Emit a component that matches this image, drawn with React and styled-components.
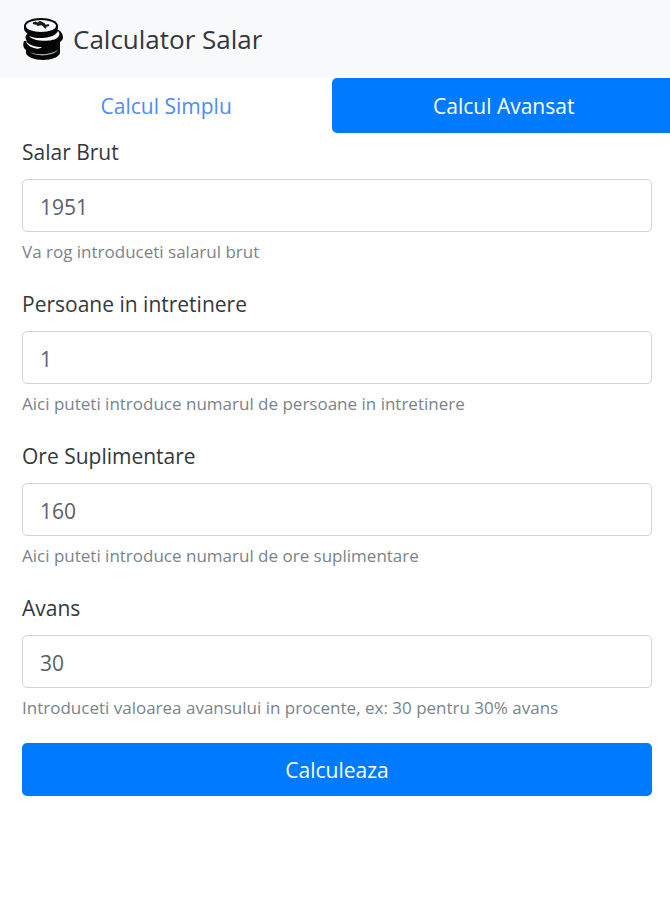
import React, { useState } from "react";
import styled, { createGlobalStyle } from "styled-components";

const FIELDS = [
  {
    id: "salar",
    label: "Salar Brut",
    value: "1951",
    hint: "Va rog introduceti salarul brut",
  },
  {
    id: "persoane",
    label: "Persoane in intretinere",
    value: "1",
    hint: "Aici puteti introduce numarul de persoane in intretinere",
  },
  {
    id: "ore",
    label: "Ore Suplimentare",
    value: "160",
    hint: "Aici puteti introduce numarul de ore suplimentare",
  },
  {
    id: "avans",
    label: "Avans",
    value: "30",
    hint: "Introduceti valoarea avansului in procente, ex: 30 pentru 30% avans",
  },
];

const CoinsLogo = () => (
  <svg width="42" height="44" viewBox="0 0 42 44" aria-hidden="true">
    <path
      d="M4 31v5c1 4 8 7 17 7s16-3 17-7v-7z"
      fill="#050505"
    />
    <path d="M7 34c7 4 20 4 29-1-4 6-23 8-29 1z" fill="#a3a5a7" />
    <path
      d="M2 24c-1 2-1 5 0 7 3 4 10 6 18 6 9 0 17-4 18-8v-8z"
      fill="#050505"
    />
    <path d="M4 24c3 4 9 6 16 6-2 2-5 2-8 1-4-1-8-4-8-7z" fill="#f8f9fa" />
    <path
      d="M5 17c-2 2-2 5 0 7 4 4 10 5 17 5 10 0 18-3 19-8 0-4-2-7-5-8z"
      fill="#050505"
    />
    <path
      d="M7 19c4 2 13 3 20 1 5-1 8-4 9-6 2 2 2 5-1 7-5 4-23 4-28-2z"
      fill="#f8f9fa"
    />
    <path
      d="M2 9c0-5 8-8 17-8s17 3 17 8v3c-1 5-8 8-17 8S3 17 2 12z"
      fill="#050505"
    />
    <ellipse cx="19" cy="9" rx="15" ry="6" fill="#f8f9fa" />
    <path
      d="M11 6l4 1 3-2 4 2 1 2 4-1M13 5l3 3 4-1 4 4"
      fill="none"
      stroke="#171717"
      strokeWidth="2"
    />
  </svg>
);

const Field = ({ id, label, value, hint, onChange }) => (
  <Group>
    <Label htmlFor={id}>{label}</Label>
    <Input
      id={id}
      value={value}
      inputMode="numeric"
      aria-describedby={`${id}-hint`}
      onChange={(e) => onChange(id, e.target.value)}
    />
    <Hint id={`${id}-hint`}>{hint}</Hint>
  </Group>
);

const App = () => {
  const [fields, setFields] = useState(FIELDS);
  const [tab, setTab] = useState("avansat");

  const handleChange = (id, value) => {
    setFields(fields.map((f) => (f.id === id ? { ...f, value } : f)));
  };

  return (
    <>
      <GlobalStyle />
      <Navbar>
        <Brand href="#">
          <CoinsLogo />
          Calculator Salar
        </Brand>
      </Navbar>
      <Main>
        <Tabs>
          <Tab $active={tab === "simplu"} onClick={() => setTab("simplu")}>
            Calcul Simplu
          </Tab>
          <Tab $active={tab === "avansat"} onClick={() => setTab("avansat")}>
            Calcul Avansat
          </Tab>
        </Tabs>
        <Form onSubmit={(e) => e.preventDefault()}>
          {fields.map((field) => (
            <Field key={field.id} {...field} onChange={handleChange} />
          ))}
          <Submit type="submit">Calculeaza</Submit>
        </Form>
      </Main>
    </>
  );
};

export default App;

const GlobalStyle = createGlobalStyle`
  * {
    box-sizing: border-box;
  }

  body {
    margin: 0;
    background: #fff;
    color: #34383c;
    font-family: "Open Sans", "Noto Sans", sans-serif;
    font-size: 21px;
    line-height: 34px;
  }

  button,
  input {
    font: inherit;
  }
`;

const Navbar = styled.header`
  display: flex;
  align-items: center;
  padding: 17px 22px 16px;
  background: #f8f9fa;
`;

const Brand = styled.a`
  display: flex;
  align-items: center;
  gap: 9px;
  color: #34383c;
  font-size: 26px;
  text-decoration: none;
`;

const Main = styled.main`
  overflow-x: hidden;
`;

/* the row bleeds past the right edge, so the last tab has no right corners */
const Tabs = styled.nav`
  display: flex;
  margin-right: -5px;
  padding-top: 1px;
`;

const Tab = styled.button`
  flex: 1 1 auto;
  height: 55px;
  border: 0;
  border-radius: 5px;
  background: ${({ $active }) => ($active ? "#007bff" : "transparent")};
  color: ${({ $active }) => ($active ? "#fff" : "#4d8bf5")};
  cursor: pointer;
`;

const Form = styled.form`
  padding: 2px 18px 22px 22px;
`;

const Group = styled.div`
  display: flex;
  flex-direction: column;
  margin-bottom: 21px;
`;

const Label = styled.label`
  margin-bottom: 10px;
`;

const Input = styled.input`
  width: 100%;
  height: 53px;
  padding: 2px 17px 0;
  border: 1px solid #ced4da;
  border-radius: 5px;
  background: #fff;
  color: #5a6168;
`;

const Hint = styled.small`
  margin-top: 6px;
  color: #7b838a;
  font-size: 17px;
  line-height: 28px;
`;

const Submit = styled.button`
  width: 100%;
  height: 53px;
  border: 0;
  border-radius: 5px;
  background: #007bff;
  color: #fff;
  cursor: pointer;
`;
